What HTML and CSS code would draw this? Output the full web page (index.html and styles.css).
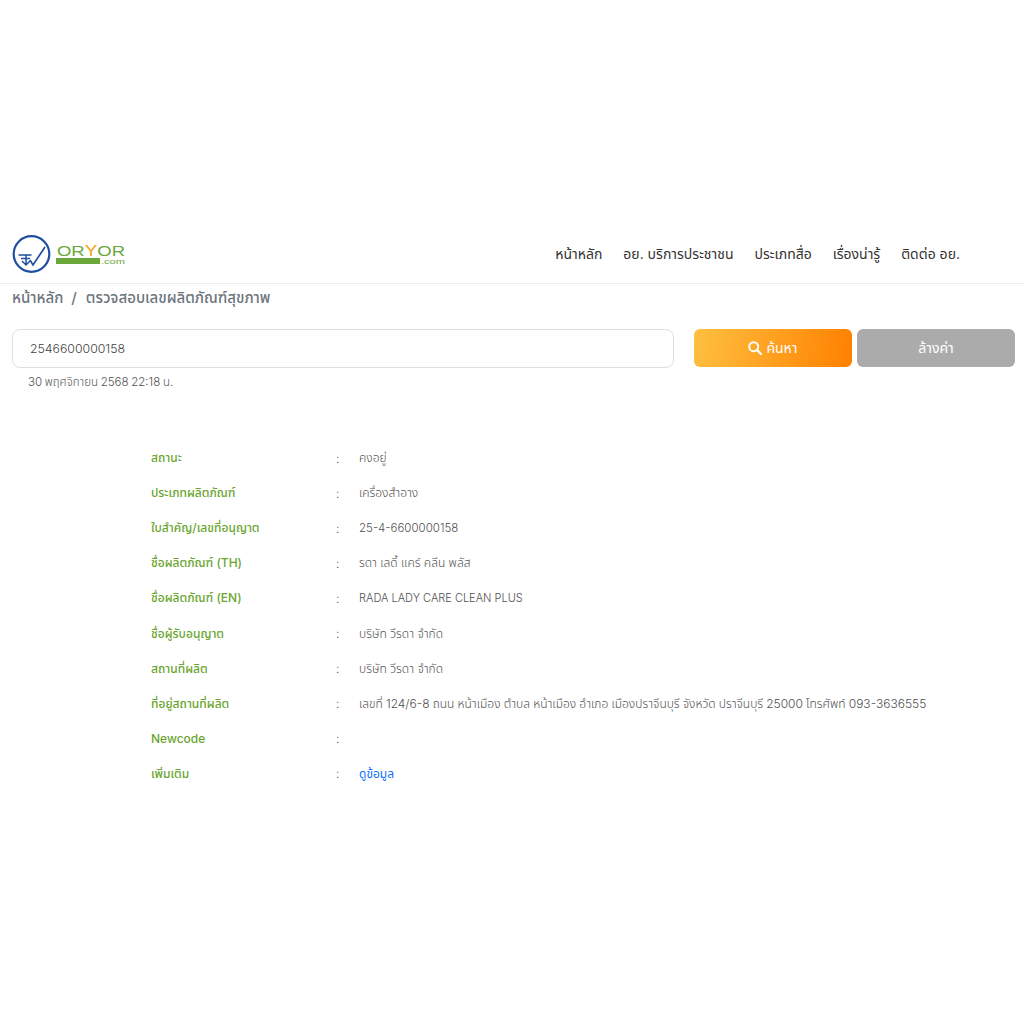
FILE: index.html
```html
<!DOCTYPE html>
<html lang="th">
<head>
    <meta charset="UTF-8">
    <meta name="viewport" content="width=device-width, initial-scale=1.0">
    <title>ตรวจสอบเลขผลิตภัณฑ์สุขภาพ</title>
    <link rel="stylesheet" href="styles.css">
</head>
<body>
    <div class="top-space"></div>
    <header class="navbar">
        <a class="logo" href="#">
            <svg width="114" height="40" viewBox="0 0 114 40">
                <circle cx="19.500" cy="20" r="17.800" fill="none" stroke="#1f4fa3" stroke-width="2.200"/>
                <path d="M6.500 21h13M9 24.500h9M14 21v10M10 27l4 4 4-4" fill="none" stroke="#1f4fa3" stroke-width="1.500"/>
                <path d="M18 26l3 5L33 13" fill="none" stroke="#1f4fa3" stroke-width="1.700"/>
                <text x="45" y="21.500" class="logo-word" textLength="68" lengthAdjust="spacingAndGlyphs">OR<tspan fill="#f5a623">Y</tspan>OR</text>
                <rect x="44" y="24" width="44" height="6" fill="#6aa83c"/>
                <text x="89" y="30" class="logo-com" textLength="24" lengthAdjust="spacingAndGlyphs">.com</text>
            </svg>
        </a>
        <nav class="menu">
            <a href="#">หน้าหลัก</a>
            <a href="#">อย. บริการประชาชน</a>
            <a href="#">ประเภทสื่อ</a>
            <a href="#">เรื่องน่ารู้</a>
            <a href="#">ติดต่อ อย.</a>
        </nav>
    </header>

    <div class="breadcrumb">
        <span>หน้าหลัก</span>
        <span class="sep">/</span>
        <span>ตรวจสอบเลขผลิตภัณฑ์สุขภาพ</span>
    </div>

    <div class="search">
        <input type="text" value="2546600000158" spellcheck="false">
        <div class="buttons">
            <button class="btn-search">
                <svg width="14" height="14" viewBox="0 0 14 14">
                    <circle cx="5.700" cy="5.700" r="4.500" fill="none" stroke="#fff" stroke-width="2"/>
                    <path d="M9 9l4 4" stroke="#fff" stroke-width="2.400" stroke-linecap="round"/>
                </svg>
                ค้นหา
            </button>
            <button class="btn-clear">ล้างค่า</button>
        </div>
    </div>
    <p class="date">30 พฤศจิกายน 2568 22:18 น.</p>

    <div class="result">
        <div class="row"><div class="label">สถานะ</div><div class="colon">:</div><div class="value">คงอยู่</div></div>
        <div class="row"><div class="label">ประเภทผลิตภัณฑ์</div><div class="colon">:</div><div class="value">เครื่องสำอาง</div></div>
        <div class="row"><div class="label">ใบสำคัญ/เลขที่อนุญาต</div><div class="colon">:</div><div class="value latin">25-4-6600000158</div></div>
        <div class="row"><div class="label">ชื่อผลิตภัณฑ์ (TH)</div><div class="colon">:</div><div class="value">รดา เลดี้ แคร์ คลีน พลัส</div></div>
        <div class="row"><div class="label">ชื่อผลิตภัณฑ์ (EN)</div><div class="colon">:</div><div class="value caps">RADA LADY CARE CLEAN PLUS</div></div>
        <div class="row"><div class="label">ชื่อผู้รับอนุญาต</div><div class="colon">:</div><div class="value">บริษัท วีรดา จำกัด</div></div>
        <div class="row"><div class="label">สถานที่ผลิต</div><div class="colon">:</div><div class="value">บริษัท วีรดา จำกัด</div></div>
        <div class="row"><div class="label">ที่อยู่สถานที่ผลิต</div><div class="colon">:</div><div class="value addr">เลขที่ 124/6-8 ถนน หน้าเมือง ตำบล หน้าเมือง อำเภอ เมืองปราจีนบุรี จังหวัด ปราจีนบุรี 25000 โทรศัพท์ 093-3636555</div></div>
        <div class="row"><div class="label">Newcode</div><div class="colon">:</div><div class="value"></div></div>
        <div class="row"><div class="label">เพิ่มเติม</div><div class="colon">:</div><div class="value"><a href="#">ดูข้อมูล</a></div></div>
    </div>
</body>
</html>
```

FILE: styles.css
```css
*{
    margin: 0;
    padding: 0;
    box-sizing: border-box;
    font-family: Inter,'Noto Sans Thai','Noto Sans',sans-serif;
}
body{
    background: #fff;
    color: #555;
}
a{
    text-decoration: none;
}
.top-space{
    height: 233px;
}
.navbar{
    height: 51px;
    display: flex;
    align-items: center;
    justify-content: space-between;
    padding: 0 64px 8px 12px;
    border-bottom: 1px solid #e9eef3;
}
.logo{
    display: flex;
}
.logo-word{
    font-family: 'Liberation Sans',sans-serif;
    font-size: 14px;
    fill: #6aa83c;
}
.logo-com{
    font-family: 'Liberation Sans',sans-serif;
    font-size: 8px;
    fill: #6aa83c;
}
.menu{
    display: flex;
    gap: 21px;
}
.menu a{
    color: #333;
    font-size: 14px;
    line-height: 20px;
}
.breadcrumb{
    display: flex;
    gap: 8px;
    padding: 4px 12px 0;
    font-size: 15px;
    line-height: 20px;
    font-weight: 500;
    color: #6c757d;
}
.breadcrumb .sep{
    margin-right: 1px;
}
.search{
    display: flex;
    justify-content: space-between;
    margin-top: 21px;
    padding: 0 9px 0 12px;
}
.search input{
    width: 662px;
    height: 39px;
    border: 1px solid #dedfe2;
    border-radius: 8px;
    padding: 0 17px 1px;
    outline: 0;
    font-size: 12.300px;
    font-weight: 300;
    color: #444;
}
.buttons{
    display: flex;
    gap: 5px;
}
.buttons button{
    width: 158px;
    height: 38px;
    border: none;
    border-radius: 6px;
    color: #fff;
    font-size: 14px;
    cursor: pointer;
}
.btn-search{
    background: linear-gradient(100deg,#ffc040,#ff8000);
}
.btn-search svg{
    vertical-align: -2px;
}
.btn-clear{
    background: #ababab;
}
.date{
    padding-left: 28px;
    margin-top: 4px;
    font-size: 11.500px;
    font-weight: 300;
    word-spacing: -.5px;
    line-height: 20px;
    color: #505050;
}
.result{
    margin-top: 48.500px;
    padding-left: 151px;
}
.row{
    display: flex;
    align-items: center;
    height: 35.100px;
    font-size: 12px;
    font-weight: 300;
    color: #505050;
}
.label{
    width: 185px;
    color: #6aa52f;
    font-weight: 500;
}
.colon{
    width: 23px;
}
.latin{
    font-size: 11.500px;
}
.caps{
    font-size: 11px;
}
.addr{
    word-spacing: -.25px;
}
.value a{
    color: #0d6efd;
    font-weight: 400;
}
```
